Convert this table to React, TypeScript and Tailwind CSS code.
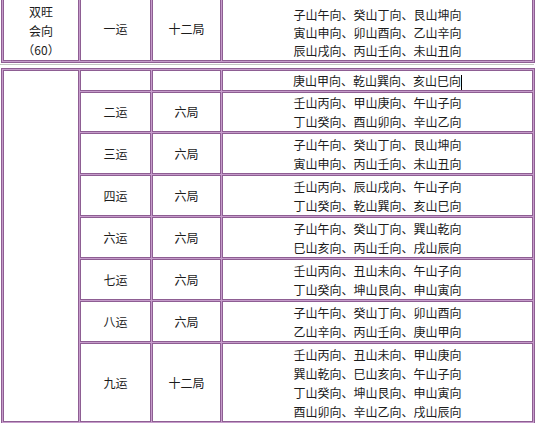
const rows: { yun: string; ju: string; lines: string[]; h: string }[] = [
  { yun: "二运", ju: "六局", lines: ["壬山丙向、甲山庚向、午山子向", "丁山癸向、酉山卯向、辛山乙向"], h: "h-[40px]" },
  { yun: "三运", ju: "六局", lines: ["子山午向、癸山丁向、艮山坤向", "寅山申向、丙山壬向、未山丑向"], h: "h-[41px]" },
  { yun: "四运", ju: "六局", lines: ["壬山丙向、辰山戌向、午山子向", "丁山癸向、乾山巽向、亥山巳向"], h: "h-[41px]" },
  { yun: "六运", ju: "六局", lines: ["子山午向、癸山丁向、巽山乾向", "巳山亥向、丙山壬向、戌山辰向"], h: "h-[41px]" },
  { yun: "七运", ju: "六局", lines: ["壬山丙向、丑山未向、午山子向", "丁山癸向、坤山艮向、申山寅向"], h: "h-[41px]" },
  { yun: "八运", ju: "六局", lines: ["子山午向、癸山丁向、卯山酉向", "乙山辛向、丙山壬向、庚山甲向"], h: "h-[41px]" },
  {
    yun: "九运",
    ju: "十二局",
    lines: [
      "壬山丙向、丑山未向、甲山庚向",
      "巽山乾向、巳山亥向、午山子向",
      "丁山癸向、坤山艮向、申山寅向",
      "酉山卯向、辛山乙向、戌山辰向",
    ],
    h: "h-[79px]",
  },
];

const cell = "border border-[#8e5e93] bg-white text-center align-middle p-0";

export default function App() {
  return (
    <div
      className="w-[540px] h-[423px] overflow-hidden bg-white text-[12px] text-[#1c1c1c]"
      style={{ fontFamily: '"Noto Sans CJK SC", "Noto Sans", sans-serif' }}
    >
      <table className="ml-[1px] -mt-[6px] w-[534px] table-fixed border-separate border-spacing-[1px] border border-[#8e5e93] bg-[#c69ccb]">
        <tbody>
          <tr>
            <td className={`${cell} w-[76px] h-[65px] !align-bottom pb-[1px] leading-[19px]`}>
              <div>双旺</div>
              <div>会向</div>
              <div>（60）</div>
            </td>
            <td className={`${cell} w-[71px]`}>一运</td>
            <td className={`${cell} w-[69px]`}>十二局</td>
            <td className={`${cell} !align-bottom leading-[18px]`}>
              <div>子山午向、癸山丁向、艮山坤向</div>
              <div>寅山申向、卯山酉向、乙山辛向</div>
              <div>辰山戌向、丙山壬向、未山丑向</div>
            </td>
          </tr>
        </tbody>
      </table>
      <div className="mt-[1px] h-[1px] w-[534px] bg-[#c4c8c4]" />
      <table className="ml-[1px] mt-[3px] w-[534px] table-fixed border-separate border-spacing-[1px] border border-[#8e5e93] bg-[#c69ccb]">
        <tbody>
          <tr>
            <td className={`${cell} w-[76px]`} rowSpan={8} />
            <td className={`${cell} w-[71px] h-[21px]`} />
            <td className={`${cell} w-[69px]`} />
            <td className={`${cell} leading-[19px]`}>
              庚山甲向、乾山巽向、亥山巳向
              <span className="inline-block w-[1px] h-[15px] bg-black align-middle" />
            </td>
          </tr>
          {rows.map((r) => (
            <tr key={r.yun}>
              <td className={`${cell} ${r.h}`}>{r.yun}</td>
              <td className={cell}>{r.ju}</td>
              <td className={`${cell} leading-[19px]`}>
                {r.lines.map((l) => (
                  <div key={l}>{l}</div>
                ))}
              </td>
            </tr>
          ))}
        </tbody>
      </table>
    </div>
  );
}
